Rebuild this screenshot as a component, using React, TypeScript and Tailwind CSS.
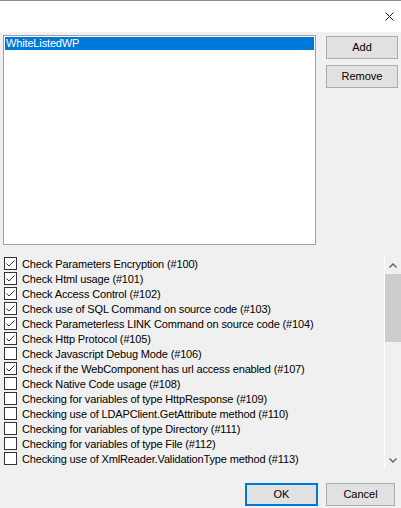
const checks = [
  { label: "Check Parameters Encryption (#100)", on: true },
  { label: "Check Html usage (#101)", on: true },
  { label: "Check Access Control (#102)", on: true },
  { label: "Check use of SQL Command on source code (#103)", on: true },
  { label: "Check Parameterless LINK Command on source code (#104)", on: true },
  { label: "Check Http Protocol (#105)", on: true },
  { label: "Check Javascript Debug Mode (#106)", on: false },
  { label: "Check if the WebComponent has url access enabled (#107)", on: true },
  { label: "Check Native Code usage (#108)", on: false },
  { label: "Checking for variables of type HttpResponse (#109)", on: false },
  { label: "Checking use of LDAPClient.GetAttribute method (#110)", on: false },
  { label: "Checking for variables of type Directory (#111)", on: false },
  { label: "Checking for variables of type File (#112)", on: false },
  { label: "Checking use of XmlReader.ValidationType method (#113)", on: false },
];

function CheckBox({ on }: { on: boolean }) {
  return (
    <div className="flex h-[13px] w-[13px] shrink-0 items-center justify-center border border-[#333333] bg-white">
      {on && (
        <svg width="11" height="11" viewBox="0 0 11 11">
          <path d="M1.5 5.5 L4 8 L9.5 2.5" fill="none" stroke="#333333" strokeWidth="1" />
        </svg>
      )}
    </div>
  );
}

function WinButton({ label, primary = false, width }: { label: string; primary?: boolean; width: string }) {
  return (
    <button
      type="button"
      className={`flex h-[23px] items-center justify-center bg-[#e1e1e1] text-[11px] text-black ${width} ${
        primary ? "border-2 border-[#0078d7]" : "border border-[#adadad]"
      }`}
    >
      {label}
    </button>
  );
}

export default function App() {
  return (
    <div className="relative h-[508px] w-[401px] overflow-hidden bg-[#f0f0f0] font-['Liberation_Sans',Arial,sans-serif] text-[11px] text-black">
      <div className="flex h-[32px] justify-end border-t border-[#8a8a8a] bg-white pr-[7px] pt-[11px]">
        <svg width="9" height="9" viewBox="0 0 9 9">
          <path d="M0.5 0.5 L8.5 8.5 M8.5 0.5 L0.5 8.5" stroke="#1a1a1a" strokeWidth="1" />
        </svg>
      </div>

      <div className="flex pl-[3px] pt-[3px]">
        <div className="h-[210px] w-[313px] border border-[#a0a0a0] bg-white p-[1px]">
          <div className="flex h-[13px] items-center bg-[#0078d7] pl-[1px] leading-none tracking-[-0.15px] text-white">
            WhiteListedWP
          </div>
        </div>
        <div className="ml-[10px] flex flex-col gap-[6px] pt-[1px]">
          <WinButton label="Add" width="w-[72px]" />
          <WinButton label="Remove" width="w-[72px]" />
        </div>
      </div>

      <div className="mt-[11px] flex h-[213px]">
        <div className="flex-1 pl-[4px] pt-[1px]">
          {checks.map((c) => (
            <div key={c.label} className="flex h-[15px] items-start gap-[5px]">
              <CheckBox on={c.on} />
              <span className="whitespace-nowrap leading-[14px] tracking-[-0.15px]">{c.label}</span>
            </div>
          ))}
        </div>
        <div className="flex w-[17px] shrink-0 flex-col border-l border-white bg-[#f0f0f0]">
          <div className="flex h-[18px] items-center justify-center">
            <svg width="8" height="5" viewBox="0 0 8 5">
              <path d="M0.5 4.5 L4 1 L7.5 4.5" fill="none" stroke="#606060" strokeWidth="1.4" />
            </svg>
          </div>
          <div className="h-[68px] bg-[#cdcdcd]" />
          <div className="flex-1" />
          <div className="flex h-[18px] items-center justify-center">
            <svg width="8" height="5" viewBox="0 0 8 5">
              <path d="M0.5 0.5 L4 4 L7.5 0.5" fill="none" stroke="#606060" strokeWidth="1.4" />
            </svg>
          </div>
        </div>
      </div>

      <div className="mt-[14px] flex justify-end gap-[8px] pr-[6px]">
        <WinButton label="OK" primary width="w-[73px]" />
        <WinButton label="Cancel" width="w-[69px]" />
      </div>
    </div>
  );
}
